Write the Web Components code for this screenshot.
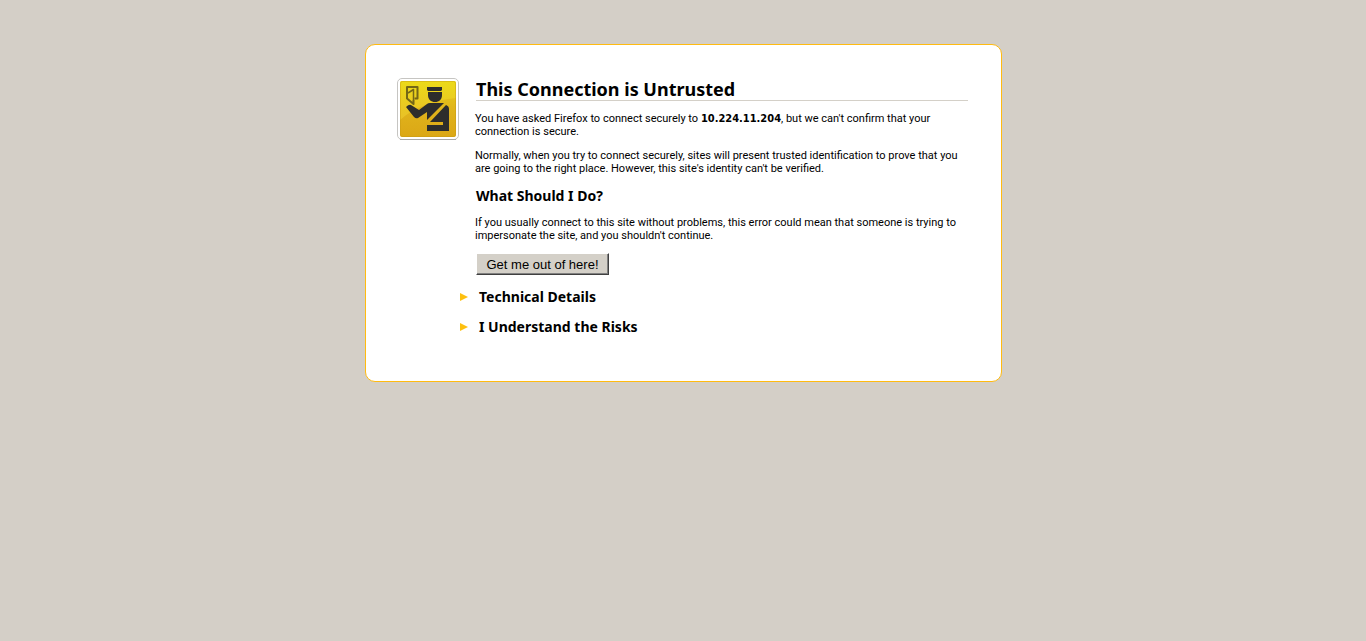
<!DOCTYPE html>
<html lang="en">
<head>
<meta charset="utf-8">
<title>Untrusted Connection</title>
<style>
body { margin: 0; padding: 44px 16px 44px 17px; background: #d4cfc7; color: #000; font: 11px/13px Roboto, Tahoma, sans-serif; }
b { font-family: "DejaVu Sans Condensed", sans-serif; line-height: 1; }
</style>
</head>
<body>
<error-card>
  <officer-icon slot="icon"></officer-icon>
  <h1 slot="title">This Connection is Untrusted</h1>
  <error-copy>
    <p>You have asked Firefox to connect securely to <b>10.224.11.204</b>, but we can't confirm that your<br>connection is secure.</p>
    <p>Normally, when you try to connect securely, sites will present trusted identification to prove that you<br>are going to the right place. However, this site's identity can't be verified.</p>
    <h2>What Should I Do?</h2>
    <p>If you usually connect to this site without problems, this error could mean that someone is trying to<br>impersonate the site, and you shouldn't continue.</p>
  </error-copy>
  <classic-button>Get me out of here!</classic-button>
  <expand-section>Technical Details</expand-section>
  <expand-section>I Understand the Risks</expand-section>
</error-card>
<script>
const define = (name, html) => {
  const template = document.createElement('template');
  template.innerHTML = html;
  customElements.define(name, class extends HTMLElement {
    constructor() {
      super();
      this.attachShadow({ mode: 'open' }).append(template.content.cloneNode(true));
    }
  });
};

define('error-card', `
<style>
:host { display: grid; grid-template-columns: 62px minmax(0, 1fr); column-gap: 16px; box-sizing: border-box; max-width: 637px; margin: 0 auto; padding: 33px 33px 46px 31px; background: #fff; border: 1px solid #fb1; border-radius: 10px; }
header { padding-left: 1px; }
::slotted(h1) { margin: 0; border-bottom: 1px solid #d4d0c8; font-family: "Noto Sans", sans-serif; font-size: 18px; line-height: 22px; font-weight: bold; }
</style>
<slot name="icon"></slot>
<main><header><slot name="title"></slot></header><slot></slot></main>`);

define('error-copy', `
<style>
:host { display: block; }
::slotted(p) { margin: 11px 0; }
::slotted(h2) { margin: 11px 0; font-family: "Noto Sans", sans-serif; font-size: 14px; line-height: 19px; padding-left: 1px; }
@media (min-width: 700px) { ::slotted(p) { white-space: nowrap; } }
</style><slot></slot>`);

define('classic-button', `
<style>
:host { display: block; padding-left: 1px; }
button { display: block; box-sizing: border-box; height: 22px; width: 133px; padding: 1px 0 0; background: #d4d0c8; border: 1px solid; border-color: #fff #404040 #404040 #fff; box-shadow: inset -1px -1px #808080; border-radius: 0; color: #000; font: 13px/16px "Liberation Sans", Arial, sans-serif; }
</style>
<button type="button"><slot></slot></button>`);

define('expand-section', `
<style>
:host { display: block; margin: 13px 0 0 -16px; }
h2 { margin: 0; font-family: "Noto Sans", sans-serif; font-size: 14px; line-height: 17px; }
button { display: flex; align-items: center; gap: 11px; padding: 0; border: 0; background: none; color: inherit; font: inherit; cursor: pointer; }
svg { display: block; }
</style>
<h2><button type="button" aria-expanded="false"><svg width="9" height="8" viewBox="0 0 9 8" aria-hidden="true"><path d="M1 0L9 4L1 8Z" fill="#fdc010"/></svg><slot></slot></button></h2>`);

define('officer-icon', `
<style>:host { display: block; width: 62px; height: 62px; } svg { display: block; }</style>
<svg width="62" height="62" viewBox="0 0 62 62" role="img" aria-label="Passport officer">
<defs>
<linearGradient id="gold" x1="0" y1="0" x2="0" y2="1"><stop offset="0" stop-color="#e9d219"/><stop offset=".5" stop-color="#e0b41b"/><stop offset="1" stop-color="#dba716"/></linearGradient>
<linearGradient id="shine" x1="0" y1="0" x2="0" y2="1"><stop offset="0" stop-color="#eddd18"/><stop offset="1" stop-color="#ecc62c"/></linearGradient>
</defs>
<rect x=".5" y=".5" width="61" height="61" rx="4.5" fill="#fff" stroke="#c6c5c2"/>
<path d="M3 61.5H59" stroke="#aaa9a7"/>
<rect x="3" y="3" width="56" height="56" rx="2" fill="url(#gold)"/>
<path d="M5 3H57Q59 3 59 5V20C37 22 16 30 3 42V5Q3 3 5 3Z" fill="url(#shine)" opacity=".75"/>
<rect x="3.5" y="3.5" width="55" height="55" rx="2" fill="none" stroke="#c69914" opacity=".45"/>
<g fill="none" stroke="#746717" stroke-width="2" stroke-linejoin="round"><path d="M10 21V9H20.5V20.500H17.500"/><path d="M10 20.500L16.500 26V22"/><path d="M11 15L16.500 11.500V22" stroke-width="1.500"/></g>
<g fill="#2d2d2c">
<path d="M30 9H45V12L44 13H31L30 12Z"/>
<path d="M31 14H45V17C45 21.500 42 24 38 24S31 21.500 31 17Z"/>
<path d="M9 29Q12 26 14 27L22 32L30 26Q31 25 33 25H47L30 42V34L21 40Q19 41 17 39Z"/>
<path d="M49 27Q52 28 52 31V53H30V47H46V44H33Z"/>
</g>
</svg>`);
</script>
</body>
</html>
